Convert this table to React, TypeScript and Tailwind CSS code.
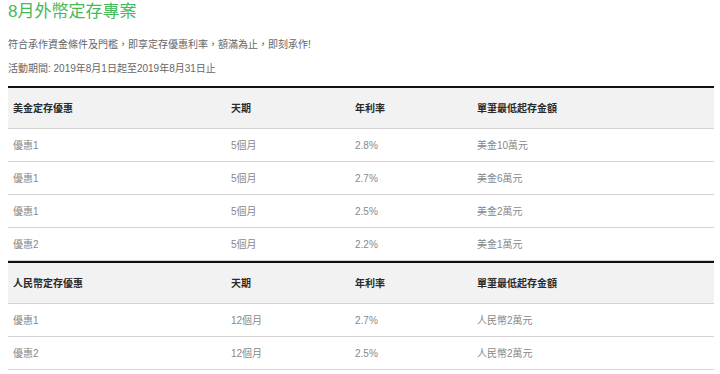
import React from "react";

const font = { fontFamily: '"Liberation Sans", "Noto Sans CJK TC", sans-serif' };

type Row = [string, string, string, string];

const usd: Row[] = [
  ["優惠1", "5個月", "2.8%", "美金10萬元"],
  ["優惠1", "5個月", "2.7%", "美金6萬元"],
  ["優惠1", "5個月", "2.5%", "美金2萬元"],
  ["優惠2", "5個月", "2.2%", "美金1萬元"],
];
const rmb: Row[] = [
  ["優惠1", "12個月", "2.7%", "人民幣2萬元"],
  ["優惠2", "12個月", "2.5%", "人民幣2萬元"],
];

function Section({ title, rows }: { title: string; rows: Row[] }) {
  return (
    <div className="border-t-2 border-[#111]">
      <div className="grid grid-cols-[218px_124px_122px_1fr] h-[41px] items-center bg-[#f2f2f2] border-b border-[#d4d4d4] text-[10px] font-bold text-[#2a2a2a]">
        <div className="pl-[5px]">{title}</div>
        <div className="pl-[5px]">天期</div>
        <div className="pl-[5px]">年利率</div>
        <div className="pl-[5px]">單筆最低起存金額</div>
      </div>
      {rows.map((r, i) => (
        <div
          key={i}
          className="grid grid-cols-[218px_124px_122px_1fr] h-[33px] items-center border-b border-[#d4d4d4] text-[10px] text-[#888]"
        >
          {r.map((c, j) => (
            <div key={j} className="pl-[5px]">
              {c}
            </div>
          ))}
        </div>
      ))}
    </div>
  );
}

export default function App() {
  return (
    <div className="w-[720px] h-[374px] bg-white pl-2 pr-[6px] overflow-hidden" style={font}>
      <h1 className="h-[24px] leading-[24px] text-[17px] text-[#47b957] font-normal">8月外幣定存專案</h1>
      <p className="mt-[9px] leading-[24px] text-[10px] text-[#666]">
        符合承作資金條件及門檻，即享定存優惠利率，額滿為止，即刻承作!
      </p>
      <p className="leading-[24px] text-[10px] text-[#666]">活動期間: 2019年8月1日起至2019年8月31日止</p>
      <div className="mt-[5px]">
        <Section title="美金定存優惠" rows={usd} />
        <Section title="人民幣定存優惠" rows={rmb} />
      </div>
    </div>
  );
}
